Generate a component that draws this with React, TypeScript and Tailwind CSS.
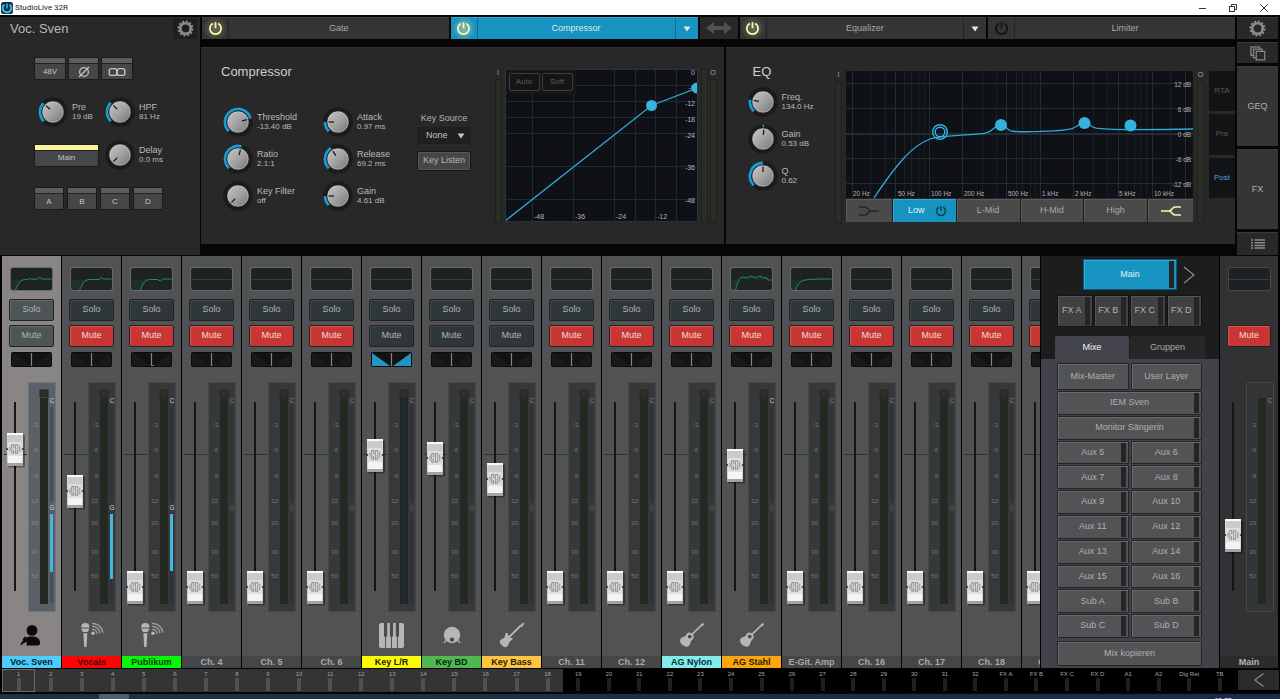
import React from "react";

const SANS = "font-['Liberation_Sans',Arial,sans-serif]";

/* ---------- icons ---------- */

function Power({ className, size = 15 }: { className: string; size?: number }) {
  return (
    <svg width={size} height={size} viewBox="0 0 16 16" className={className} fill="none" stroke="currentColor" strokeWidth="1.9">
      <path d="M5.2 2.7A6 6 0 1 0 10.8 2.7" />
      <path d="M8 1.2V7.6" />
    </svg>
  );
}

function Gear() {
  return (
    <svg width="17" height="17" viewBox="0 0 18 18" fill="none" stroke="#8b8b8b">
      <circle cx="9" cy="9" r="5.6" strokeWidth="2.8" />
      <circle cx="9" cy="9" r="7.4" strokeWidth="2.2" strokeDasharray="2.1 1.774" />
    </svg>
  );
}

function Triangle({ className }: { className: string }) {
  return (
    <svg width="8" height="6" viewBox="0 0 8 6" className={className} fill="currentColor">
      <path d="M0.5 0.5H7.5L4 5.5Z" />
    </svg>
  );
}

function SingerIcon() {
  return (
    <svg width="24" height="24" viewBox="0 0 24 24" fill="#0a0a0a" className="mr-[4px]">
      <circle cx="14" cy="7.4" r="5.4" />
      <path d="M8.6 22.4V18.4L6.4 20L5 18.8L9.6 14C11 13.2 12.3 13.6 14 13.6C19 13.4 22 16 22 19.5V20.6Q22 22.4 20.2 22.4Z" />
      <path d="M2.4 22.4L3 20L5.2 17.6L4.8 16L7 13.4L9.6 15.4L7.2 18.6L4.6 21.2Z" />
    </svg>
  );
}

function MicIcon() {
  return (
    <svg width="26" height="28" viewBox="0 0 26 28" fill="#b6b6b8">
      <path d="M2.2 6.6V6.2A4.1 4.1 0 0 1 10.4 6.2V6.6Z" />
      <path d="M2.4 7.6H10.2C10 9.6 9 10.6 8.2 11H4.4C3.5 10.6 2.6 9.6 2.4 7.6Z" />
      <path d="M4.3 12.2H8.3L7.6 26H5.2Z" />
      <circle cx="14" cy="12.3" r="1.8" />
      <g fill="none" stroke="#a4a4a6" strokeWidth="1.3">
        <path d="M13.2 8.4A4.6 4.6 0 0 1 18 12.6" />
        <path d="M13.2 5.4A7.4 7.4 0 0 1 20.9 12.2" />
        <path d="M13.2 2.5A10.3 10.3 0 0 1 23.8 11.8" />
      </g>
    </svg>
  );
}

function KeysIcon() {
  return (
    <svg width="25" height="25" viewBox="0 0 25 25">
      <rect width="25" height="25" rx="2" fill="#b6b6b8" />
      <path d="M6.6 0V25M12.5 0V25M18.4 0V25" stroke="#515254" strokeWidth="1" />
      <path d="M5 0H8.2V13.5H5ZM10.9 0H14.1V13.5H10.9ZM16.8 0H20V13.5H16.8Z" fill="#4a4b4d" />
    </svg>
  );
}

function DrumIcon() {
  return (
    <svg width="18" height="18" viewBox="0 0 18 18">
      <circle cx="9" cy="9" r="8.2" fill="#b6b6b8" />
      <circle cx="9" cy="13.6" r="2.2" fill="#4a4b4d" />
      <path d="M3 14.5L1 16.8M15 14.5L17 16.8" stroke="#b6b6b8" strokeWidth="1.2" />
    </svg>
  );
}

function BassIcon() {
  return (
    <svg width="26" height="26" viewBox="0 0 26 26" fill="#b6b6b8">
      <path d="M0.8 19.4C1.2 17 4 17 5.4 15.4C6.4 14 6 11.6 7.4 10.8C8.6 10.4 8.8 11.6 8.8 12.6L10 14.6L11.8 16C12.8 15.8 14 15.8 13.8 16.8C13.2 18.4 11.2 18.6 10.4 20.2C9.6 22.2 8.8 24.4 6.8 25.2C4.8 25.4 0.4 21.8 0.8 19.4Z" />
      <path d="M9.6 15.6L21.6 3.8" stroke="#b6b6b8" strokeWidth="1.9" />
      <path d="M20.6 3.6L24.6 0.6L25.4 1.4L22.8 5.2Z" />
    </svg>
  );
}

function GuitarIcon() {
  return (
    <svg width="26" height="26" viewBox="0 0 26 26" fill="#b6b6b8">
      <path d="M1.2 17.6C2 14.6 5.6 15.4 7 13.2C7.8 10.6 10.6 9.6 12.8 11.6C15.6 13.8 15.2 16.6 13 18C11 19.6 12 22.4 9.2 24.4C6.4 25.8 0.2 22.4 1.2 17.6Z" />
      <circle cx="10.8" cy="14.6" r="1.9" fill="#4a4b4d" />
      <path d="M12 13.4L22 3.6" stroke="#b6b6b8" strokeWidth="1.6" />
      <path d="M21.2 3.2L23.6 0.8L25.2 2.4L22.8 4.6Z" />
    </svg>
  );
}

/* ---------- knobs ---------- */

function polar(r: number, deg: number) {
  const a = ((deg - 90) * Math.PI) / 180;
  return `${(15 + r * Math.cos(a)).toFixed(2)} ${(15 + r * Math.sin(a)).toFixed(2)}`;
}

function Knob({ label, value, angle, from = -135 }: { label: string; value: string; angle: number; from?: number }) {
  const gid = "k" + label.replace(/\W/g, "") + value.replace(/\W/g, "");
  return (
    <label className="flex items-center gap-1 whitespace-nowrap">
      <span className="relative block size-[30px] shrink-0">
        <svg width="30" height="30" viewBox="0 0 30 30" className="block">
          <defs>
            <linearGradient id={gid} x1="0" y1="0" x2="1" y2="1">
              <stop offset="0" stopColor="#c8c8c8" />
              <stop offset="0.5" stopColor="#a2a2a2" />
              <stop offset="1" stopColor="#747474" />
            </linearGradient>
          </defs>
          <circle cx="15" cy="15" r="14.8" fill="#1b1b1b" />
          {angle > from && (
            <path
              d={`M${polar(13, from)}A13 13 0 ${angle - from > 180 ? 1 : 0} 1 ${polar(13, angle)}`}
              fill="none"
              stroke="#1a9ad2"
              strokeWidth="2.8"
            />
          )}
          <circle cx="15" cy="15" r="11" fill={`url(#${gid})`} stroke="#0f0f0f" strokeWidth="0.6" />
          <circle cx="15" cy="15" r="10.2" fill="none" stroke="#d8d8d8" strokeOpacity="0.5" strokeWidth="0.8" />
          <path d={`M${polar(4, angle)}L${polar(9.4, angle)}`} stroke="#1c1c1c" strokeWidth="1.3" />
        </svg>
        <input type="range" min="-135" max="135" defaultValue={angle} className="absolute inset-0 size-full cursor-pointer opacity-0" />
      </span>
      <span className="flex flex-col leading-[10px] text-[#b9b9b9]">
        <span className="text-[9px]">{label}</span>
        <span className="text-[8px]">{value}</span>
      </span>
    </label>
  );
}

/* ---------- top section ---------- */

function CapButton({ children, label, className, lit }: { children: React.ReactNode; label?: string; className: string; lit?: boolean }) {
  return (
    <button aria-label={label} className={`flex h-[23px] flex-col overflow-hidden rounded-[1px] border border-[#1a1a1a] bg-[#454647] text-[8px] text-[#c4c4c4] ${className}`}>
      <span className={`h-[6px] w-full shrink-0 border-b border-[#222] ${lit ? "bg-[#fbf3a0]" : "bg-[#5c5d5f]"}`} />
      <span className="flex w-full flex-1 items-center justify-center">{children}</span>
    </button>
  );
}

function InputPanel() {
  return (
    <section className="flex w-[200px] shrink-0 flex-col bg-[#282828]">
      <header className="flex h-[23px] items-center justify-between pl-[10px] pr-[3px]">
        <h1 className="text-[13px] text-[#b9b9b9]">Voc. Sven</h1>
        <button aria-label="Channel settings" className="flex h-5 w-6 items-center justify-center rounded-[2px] bg-[#1e1e1e]">
          <Gear />
        </button>
      </header>
      <div className="flex flex-col pl-[34px] pt-[17px]">
        <div className="flex gap-[2px]">
          <CapButton className="w-[32px]">48V</CapButton>
          <CapButton label="Polarity" className="w-[31px]">
            <svg width="14" height="12" viewBox="0 0 14 12" fill="none" stroke="#c4c4c4" strokeWidth="1.2">
              <circle cx="7" cy="6" r="4.4" />
              <path d="M2 11L12 1" />
            </svg>
          </CapButton>
          <CapButton label="Link" className="w-[32px]">
            <svg width="18" height="10" viewBox="0 0 18 10" fill="none" stroke="#c4c4c4" strokeWidth="1.4">
              <rect x="1.2" y="1.6" width="7.6" height="6.8" rx="2.2" />
              <rect x="9.2" y="1.6" width="7.6" height="6.8" rx="2.2" />
            </svg>
          </CapButton>
        </div>
        <div className="mt-[17px] grid grid-cols-[67px_80px] pl-1">
          <Knob label="Pre" value="19 dB" angle={-48} />
          <Knob label="HPF" value="81 Hz" angle={-45} />
        </div>
        <div className="mt-[13px] grid grid-cols-[71px_80px] items-center">
          <CapButton className="w-[65px]" lit>Main</CapButton>
          <Knob label="Delay" value="0.0 ms" angle={-135} />
        </div>
        <div className="mt-[17px] flex gap-[3px]">
          {["A", "B", "C", "D"].map((l) => (
            <CapButton key={l} className="w-[30px]">{l}</CapButton>
          ))}
        </div>
      </div>
    </section>
  );
}

function ProcessorTab({ name, on, active, menu, bare }: { name: string; on?: boolean; active?: boolean; menu?: boolean; bare?: boolean }) {
  const bg = active ? "bg-[#1793c1]" : "bg-[#343435]";
  const line = active ? "border-[#0e6d92]" : "border-[#232323]";
  return (
    <div className={`flex flex-1 items-stretch border-t ${bg} ${active ? "border-[#2fabd8]" : "border-[#414141]"}`}>
      <button
        aria-label={`${name} on`}
        className={`flex w-[27px] items-center justify-center border-r ${line} ${
          on ? (active ? "bg-[radial-gradient(circle,#7fb5a8_10%,#1793c1_70%)]" : "bg-[radial-gradient(circle,#66664c_10%,#343435_72%)]") : ""
        }`}
      >
        <Power className={on ? "text-[#f8f7b4]" : bare ? "text-[#121212]" : "text-[#777]"} />
      </button>
      <button className={`flex-1 text-[9px] ${active ? "text-[#dcebf2]" : "text-[#a8a8a8]"}`}>{name}</button>
      {menu && (
        <button aria-label={`${name} model`} className={`flex w-[23px] items-center justify-center border-l ${line}`}>
          <Triangle className="text-[#e6e6e6]" />
        </button>
      )}
    </div>
  );
}

function SideMeter({ label, tall }: { label?: string; tall?: boolean }) {
  return (
    <div className="flex w-[7px] flex-col items-center">
      {!tall && <span className="h-[10px] text-[7px] leading-[7px] text-[#a6a6a6]">{label}</span>}
      <span className="w-full flex-1 border border-[#1e201c] bg-[#2a2d26]" />
    </div>
  );
}

function CompressorGraph() {
  return (
    <div className="relative h-[153px] w-[193px] overflow-hidden border border-[#243441] bg-[#101116]">
      <svg width="191" height="151" viewBox="1 1 191 151" className={`block ${SANS}`}>
        <g stroke="#1f2b33" strokeWidth="1">
          {[27, 68, 109, 130, 150, 171].map((x) => <path key={x} d={`M${x + 0.5} 0V153`} />)}
          {[16, 32, 48, 64, 97, 130].map((y) => <path key={y} d={`M0 ${y + 0.5}H193`} />)}
        </g>
        <g fill="#b4b4b4" fontSize="7">
          {[["0", 6], ["-6", 21], ["-12", 37], ["-18", 53], ["-24", 69], ["-36", 101], ["-48", 134]].map(([t, y]) => (
            <text key={t} x="190" y={y} textAnchor="end">{t}</text>
          ))}
          {[["-48", 29], ["-36", 70], ["-24", 111], ["-12", 152]].map(([t, x]) => (
            <text key={t} x={x} y="150">{t}</text>
          ))}
        </g>
        <path d="M0 152L146.5 36.5L192 19" fill="none" stroke="#2fa9d6" strokeWidth="1.3" />
        <circle cx="146.5" cy="36.5" r="5.5" fill="#35b2de" />
        <circle cx="192" cy="19" r="5.5" fill="#35b2de" />
      </svg>
      <div className="absolute left-0 top-0 flex gap-[2px] bg-[#161616] px-[3px] pb-[3px] pt-[3px] text-[8px] text-[#5c5c5c]">
        <button className="h-[18px] w-[31px] rounded-[2px] border border-[#3c3c3c] bg-[#151515]">Auto</button>
        <button className="h-[18px] w-[31px] rounded-[2px] border border-[#3c3c3c] bg-[#151515]">Soft</button>
      </div>
    </div>
  );
}

function CompressorPanel() {
  return (
    <section className="flex w-[523px] grow justify-between border-t border-[#303030] bg-[#282828] pl-5 pr-[7px]">
      <div className="pt-[15px]">
        <h2 className="text-[13px] leading-[18px] text-[#cfcfcf]">Compressor</h2>
        <div className="ml-[2px] mt-[26px] flex">
          <div className="flex w-[100px] flex-col gap-[7px]">
            <Knob label="Threshold" value="-13.40 dB" angle={75} />
            <Knob label="Ratio" value="2.1:1" angle={15} />
            <Knob label="Key Filter" value="off" angle={-135} />
          </div>
          <div className="flex w-[94px] flex-col gap-[7px]">
            <Knob label="Attack" value="0.97 ms" angle={-90} />
            <Knob label="Release" value="69.2 ms" angle={-33} />
            <Knob label="Gain" value="4.61 dB" angle={-90} />
          </div>
          <div className="flex w-[54px] flex-col pt-[6px] text-[9px] text-[#b4b4b4]">
            <label className="flex flex-col items-center">
              <span className="whitespace-nowrap leading-[11px]">Key Source</span>
              <span className="relative mt-[3px] block w-full">
                <select className="h-[17px] w-full appearance-none bg-[#1f1f1f] pl-[9px] text-[9px] text-[#c0c0c0]">
                  <option>None</option>
                </select>
                <Triangle className="pointer-events-none absolute right-[6px] top-[6px] text-[#c8c8c8]" />
              </span>
            </label>
            <button className="mt-[7px] h-5 whitespace-nowrap rounded-[2px] border border-[#171717] bg-[#464647] shadow-[inset_0_0_0_1px_#575757]">Key Listen</button>
          </div>
        </div>
      </div>
      <div className="flex pb-[21px] pt-[21px]">
        <SideMeter label="I" />
        <div className="ml-[3px]"><CompressorGraph /></div>
        <div className="ml-[3px] flex"><SideMeter tall /></div>
        <div className="ml-[2px] flex"><SideMeter label="O" /></div>
      </div>
    </section>
  );
}

const EQ_LINES = [24, 39, 58, 65, 72, 78, 136, 150, 170, 176, 184, 189, 247, 261, 280, 288, 294, 300, 324];
const EQ_MAJOR = [6, 49, 83, 116, 160, 194, 227, 272, 306, 339];

function EqGraph() {
  return (
    <svg width="347" height="127" viewBox="0 0 347 127" className={`block bg-[#101116] ${SANS}`}>
      <g stroke="#182027">
        {EQ_LINES.map((x) => <path key={x} d={`M${x + 0.5} 0V127`} />)}
      </g>
      <g stroke="#212d36">
        {EQ_MAJOR.map((x) => <path key={x} d={`M${x + 0.5} 0V127`} />)}
        {[12, 37, 87, 112].map((y) => <path key={y} d={`M0 ${y + 0.5}H347`} />)}
        <path d="M0 63H347" strokeWidth="2" />
      </g>
      <g fill="#b4b4b4" fontSize="6.4">
        {[["20 Hz", 7], ["50 Hz", 52], ["100 Hz", 85], ["200 Hz", 118], ["500 Hz", 162], ["1 kHz", 196], ["2 kHz", 229], ["5 kHz", 273], ["10 kHz", 308]].map(([t, x]) => (
          <text key={t} x={x} y="125">{t}</text>
        ))}
        {[["12 dB", 16], ["6 dB", 41], ["0 dB", 66], ["-6 dB", 91], ["-12 dB", 116]].map(([t, y]) => (
          <text key={t} x="345" y={y} textAnchor="end">{t}</text>
        ))}
      </g>
      <path
        d="M28 127C36 115 46 100 58 87C66 78 74 72 84 68C92 65.5 110 64.5 125 63.6C138 62.8 143 62.4 147 58C150 55.6 152 54 155 54C159 54 161 58 164 59.6C168 61.2 176 60.8 190 60.6C205 60.2 218 59.8 226 57.6C231 56 234 52 238.500 52C243 52 245 56 250 57.200C258 58.6 268 58.6 284 58.6C310 58.6 330 58.4 347 58"
        fill="none"
        stroke="#2fa9d6"
        strokeWidth="1.3"
      />
      <g fill="none" stroke="#35b2de" strokeWidth="1.4">
        <circle cx="94" cy="61" r="7.3" />
        <circle cx="94" cy="61" r="4.8" />
      </g>
      <g fill="#35b2de">
        <circle cx="155" cy="54" r="6" />
        <circle cx="238.5" cy="52" r="6" />
        <circle cx="284.500" cy="54.500" r="6" />
      </g>
    </svg>
  );
}

function EqPanel() {
  const band = "flex items-center justify-center bg-[#4a4a4b] shadow-[inset_1px_1px_0_#5b5b5c]";
  return (
    <section className="flex w-[510px] grow justify-between border-t border-[#303030] bg-[#282828] pl-[22px]">
      <div className="pt-[15px]">
        <h2 className="pl-[5px] text-[13px] leading-[18px] text-[#cfcfcf]">EQ</h2>
        <div className="mt-[6px] flex flex-col gap-[7px]">
          <Knob label="Freq." value="134.0 Hz" angle={-80} />
          <Knob label="Gain" value="0.53 dB" angle={5} from={-2} />
          <Knob label="Q" value="0.62" angle={0} />
        </div>
      </div>
      <div className="flex pb-[20px] pt-[23px]">
        <SideMeter label="I" />
        <div className="ml-[4px] flex flex-col">
          <EqGraph />
          <div className="mt-px grid h-[23px] grid-cols-[46px_1fr_1fr_1fr_1fr_45px] gap-px bg-[#1a1a1a] text-[9px] text-[#a8a8a8]">
            <button aria-label="Low shelf" className={band}>
              <svg width="20" height="10" viewBox="0 0 20 10" fill="none" stroke="#262626" strokeWidth="1.4">
                <path d="M0 1H6C9 1 9 5 12 5H20M0 9H6C9 9 9 5 12 5" />
              </svg>
            </button>
            <button className="flex items-center justify-center gap-[10px] bg-[#1793c1] pl-[6px] text-[#e6f4fa] shadow-[inset_1px_1px_0_#2fabd8]">
              Low <Power size={12} className="text-[#0b3a4e]" />
            </button>
            <button className={band}>L-Mid</button>
            <button className={band}>H-Mid</button>
            <button className={band}>High</button>
            <button aria-label="High shelf" className={band}>
              <svg width="20" height="10" viewBox="0 0 20 10" fill="none" stroke="#f8f7b4" strokeWidth="1.6">
                <path d="M20 1H14C11 1 11 5 8 5H0M20 9H14C11 9 11 5 8 5" />
              </svg>
            </button>
          </div>
        </div>
        <div className="ml-[4px] flex"><SideMeter label="O" /></div>
        <div className="ml-[5px] grid h-[127px] w-[26px] grid-rows-3 gap-[3px] text-[8px] text-[#55575a]">
          <button className="bg-[#131415]">RTA</button>
          <button className="bg-[#131415]">Pre</button>
          <button className="bg-[#131415] text-[#4aa3ea]">Post</button>
        </div>
      </div>
    </section>
  );
}

function TopArea() {
  const side = "flex items-center justify-center border-t border-[#3a3a3a] bg-[#282828]";
  return (
    <div className="flex h-[238px] pr-[2px]">
      <InputPanel />
      <div className="flex min-w-0 flex-1 flex-col pl-px">
        <div className="flex h-[22px] gap-[2px] pl-px">
          <ProcessorTab name="Gate" on />
          <ProcessorTab name="Compressor" on active menu />
          <button aria-label="Swap order" className="flex w-[38px] items-center justify-center bg-[#282828]">
            <svg width="26" height="12" viewBox="0 0 26 12" fill="#515151">
              <path d="M0 6L8 0V4H18V0L26 6L18 12V8H8V12Z" />
            </svg>
          </button>
          <ProcessorTab name="Equalizer" on menu />
          <ProcessorTab name="Limiter" bare />
        </div>
        <div className="mt-[8px] flex h-[197px] gap-[2px]">
          <CompressorPanel />
          <EqPanel />
        </div>
      </div>
      <nav className="ml-[2px] flex w-[41px] flex-col gap-[3px]">
        <button aria-label="Settings" className={`h-[22px] ${side}`}><Gear /></button>
        <button aria-label="Copy" className={`h-[21px] ${side}`}>
          <svg width="16" height="15" viewBox="0 0 16 15" fill="#282828" stroke="#8b8b8b" strokeWidth="1.2">
            <rect x="1" y="1" width="8.500" height="8.500" />
            <rect x="3.500" y="3.200" width="8.500" height="8.500" />
            <rect x="6.200" y="5.400" width="8.500" height="8.500" />
          </svg>
        </button>
        <button className={`flex-1 text-[9px] text-[#b0b0b0] ${side} bg-[#353536]`}>GEQ</button>
        <button className={`flex-1 text-[9px] text-[#b0b0b0] ${side} bg-[#353536]`}>FX</button>
        <button aria-label="List" className={`h-[23px] ${side}`}>
          <svg width="14" height="10" viewBox="0 0 14 10" stroke="#8b8b8b" strokeWidth="1.5">
            <path d="M0 1H2M3.500 1H14M0 3.700H2M3.500 3.700H14M0 6.400H2M3.500 6.400H14M0 9.100H2M3.500 9.100H14" />
          </svg>
        </button>
      </nav>
    </div>
  );
}

/* ---------- mixer ---------- */

type Channel = {
  name: string;
  fader: number;
  mute?: boolean;
  color?: string;
  icon?: React.ReactNode;
  curve?: string;
  selected?: boolean;
  comp?: boolean;
  gate?: number;
  panned?: boolean;
  panTick?: boolean;
};

const CHANNELS: Channel[] = [
  { name: "Voc. Sven", fader: 192, color: "bg-[#4dcdfb] text-[#0c1c24]", icon: <SingerIcon />, curve: "M4 22C7 14 9 12 14 11.500H17L18.500 10L20 11.200H26L28 9L30 11H40", selected: true, comp: true, gate: 58 },
  { name: "Vocals", fader: 234, mute: true, color: "bg-[#fb0505] text-[#4a0606]", icon: <MicIcon />, curve: "M8 22C11 18 11 12 18 11.500H28L30 9.500L32 11H40", comp: true, gate: 65 },
  { name: "Publikum", fader: 330, mute: true, color: "bg-[#06f806] text-[#07400a]", icon: <MicIcon />, curve: "M9 22C12 14 14 11.500 19 11.500H26L29 13L31 11H40", comp: true, gate: 57, panTick: true },
  { name: "Ch. 4", fader: 330, mute: true },
  { name: "Ch. 5", fader: 330, mute: true },
  { name: "Ch. 6", fader: 330, mute: true },
  { name: "Key L/R", fader: 198, color: "bg-[#fbfb05] text-[#222204]", icon: <KeysIcon />, panned: true },
  { name: "Key BD", fader: 201, color: "bg-[#50b850] text-[#0a260a]", icon: <DrumIcon /> },
  { name: "Key Bass", fader: 222, color: "bg-[#fcc440] text-[#2e2206]", icon: <BassIcon /> },
  { name: "Ch. 11", fader: 330, mute: true },
  { name: "Ch. 12", fader: 330, mute: true },
  { name: "AG Nylon", fader: 330, mute: true, color: "bg-[#80eeec] text-[#0c2a2a]", icon: <GuitarIcon /> },
  { name: "AG Stahl", fader: 208, mute: true, color: "bg-[#fba60d] text-[#2c1c02]", icon: <GuitarIcon />, curve: "M4 22C7 12 8 9 12 9L15 10L20 8L24 10L28 8L32 10L35 9.500L36 12H40", comp: true },
  { name: "E-Git. Amp", fader: 330, mute: true, curve: "M4 22C7 14 10 12 18 11.500L28 11H40" },
  { name: "Ch. 16", fader: 330, mute: true },
  { name: "Ch. 17", fader: 330, mute: true },
  { name: "Ch. 18", fader: 330, mute: true },
  { name: "Ch. 19", fader: 330, mute: true },
];

function Thumb({ curve, dim }: { curve?: string; dim?: boolean }) {
  return (
    <div className={`h-[22px] w-[41px] shrink-0 rounded-[2px] ${dim ? "bg-[#1e2021] shadow-[0_0_0_1px_#46484a]" : "bg-[#1e2221] shadow-[0_0_0_1px_#67696b]"}`}>
      <svg width="41" height="22" viewBox="0 0 40 22" className="block" fill="none">
        {curve ? (
          <>
            <path d={curve + "V11.500H0V22Z"} fill="#1d4a46" fillOpacity="0.35" />
            <path d={curve} stroke="#1f8a7c" strokeWidth="1" />
          </>
        ) : (
          <path d="M0 11.500H40" stroke="#25444a" strokeWidth="1" />
        )}
      </svg>
    </div>
  );
}

function FaderCap() {
  return (
    <svg width="20" height="36" viewBox="0 0 20 36" className="block">
      <rect x="2" y="2.500" width="17" height="33" rx="1.500" fill="#000" fillOpacity="0.35" />
      <rect x="1" y="1" width="16" height="33" rx="1" fill="#d4d4d4" />
      <rect x="1" y="1" width="16" height="2" fill="#fafafa" />
      <rect x="2" y="3" width="14" height="7" fill="#cbcbcb" />
      <rect x="2" y="10" width="14" height="14" fill="#dedede" />
      <rect x="2" y="24" width="14" height="7" fill="#f4f4f4" />
      <rect x="1" y="31" width="16" height="3" fill="#a3a3a3" />
      <g stroke="#7f8887" strokeWidth="0.9" fill="none">
        <path d="M4 14.500V19.500M5.800 12.500C5 15 6.600 17.500 5.600 21M7.800 12.500V16.500M9.600 12.500C8.800 15 10.400 17.500 9.400 21.500M11.600 12.500C12.400 15 11 18 12 21M13.800 13.500V20M7.600 18V21.500" />
        <path d="M5.800 12.600H8M9.600 12.600H11.600M5.600 21.200H7.600M9.400 21.200H12" />
      </g>
      <path d="M0.500 15.500L2.500 17L0.500 18.500ZM17.500 15.500L15.500 17L17.500 18.500Z" fill="#222" />
    </svg>
  );
}

const SCALE: [string, number][] = [["-3", 45], ["-6", 70], ["-9", 96], ["12", 121], ["20", 143], ["30", 172], ["50", 196]];

function Meter({ selected, comp, gate, dim, panned }: { selected?: boolean; comp?: boolean; gate?: number; dim?: boolean; panned?: boolean }) {
  const well = selected ? "#596167" : dim ? "#333537" : "#36383a";
  const inner = selected ? "#464f56" : "#303236";
  return (
    <svg width="28" height="230" viewBox="0 0 28 230" className={`block shrink-0 ${SANS}`}>
      <rect x="0.500" y="0.500" width="27" height="229" rx="1" fill={well} stroke={selected ? "#6d767c" : dim ? "#454749" : "#44474a"} />
      <g fill={selected ? "#868d92" : "#77797b"} fontSize="6">
        {SCALE.map(([t, y]) => (
          <text key={t} x="10" y={y} textAnchor="end">{t}</text>
        ))}
      </g>
      {!dim && <rect x="12" y="8" width="8" height="7" fill="#2d3127" stroke="#24271f" />}
      <rect x="12" y="16" width="8" height="206" fill={panned ? "#1f2628" : "#242922"} />
      <path d="M16 16V222" stroke={panned ? "#2a3336" : "#242922"} />
      <rect x="22" y="25" width="3" height="94" fill={inner} />
      {!dim && <rect x="22" y="131" width="3" height="90" fill={inner} />}
      {dim && <rect x="22" y="119" width="3" height="102" fill={inner} />}
      {gate && <rect x="22" y="132" width="3" height={gate} fill="#45b5e2" />}
      <text x="24" y="21" fontSize="6.500" textAnchor="middle" fill={comp ? "#cfcfcf" : "#808284"}>C</text>
      {!dim && <text x="24" y="127.500" fontSize="6.500" textAnchor="middle" fill={gate ? "#cfcfcf" : "#5c5e60"}>G</text>}
    </svg>
  );
}

function Fader({ pos, name }: { pos: number; name: string }) {
  return (
    <div className="relative w-[26px] shrink-0">
      <span className="absolute left-[2px] top-[72px] h-px w-[23px] bg-[#303132]" />
      <span className="absolute bottom-[21px] left-[12px] top-5 w-[2px] bg-[#151516]" />
      <span className="absolute left-1" style={{ top: pos - 142 }}>
        <FaderCap />
      </span>
      <input type="range" aria-label={`${name} level`} defaultValue={50} className="absolute inset-0 size-full cursor-pointer opacity-0 [writing-mode:vertical-lr]" />
    </div>
  );
}

function muteClass(mute: boolean | undefined, selected: boolean | undefined) {
  if (mute) return "bg-[#c73634] text-[#f3dcdc] shadow-[inset_1px_1px_0_#dc5350]";
  return selected
    ? "bg-[#4e5557] text-[#aeb2b3] shadow-[inset_1px_1px_0_#60686a]"
    : "bg-[#30373a] text-[#b0b4b5] shadow-[inset_1px_1px_0_#3e474a]";
}

function Strip({ ch }: { ch: Channel }) {
  const btn = "h-[22px] w-[45px] rounded-[2px] border border-[#202223] text-[9px]";
  return (
    <article className={`flex w-[59px] shrink-0 flex-col items-center pt-3 ${ch.selected ? "bg-[#8a8585]" : "bg-[#515254]"}`}>
      <Thumb curve={ch.curve} />
      <button className={`mt-[9px] ${btn} ${muteClass(false, ch.selected)}`}>Solo</button>
      <button className={`mt-1 ${btn} ${muteClass(ch.mute, ch.selected)}`}>Mute</button>
      <svg width="41" height="15" viewBox="0 0 41 15" className="mt-[5px] block">
        <rect x="0.500" y="0.500" width="40" height="14" rx="1" fill="#131313" stroke="#0a0a0a" />
        <path d="M1 1L20 14H1ZM40 1L21 14H40Z" fill="#191919" />
        {ch.panned && <path d="M1 1L19 14H1ZM40 1L22 14H40Z" fill="#2196c4" />}
        <path d="M20.500 1V14" stroke="#858585" strokeWidth="1.200" />
        {ch.panTick && <path d="M20 13.500H23" stroke="#2196c4" />}
      </svg>
      <div className="mt-[15px] flex h-[230px] w-full">
        <Fader pos={ch.fader} name={ch.name} />
        <Meter selected={ch.selected} comp={ch.comp} gate={ch.gate} panned={ch.panned} />
      </div>
      <div className="flex w-full flex-1 items-center justify-center pt-[2px]">{ch.icon}</div>
      <h3 className={`h-3 w-full whitespace-nowrap text-center text-[9px] font-bold leading-[13px] ${ch.color ?? "bg-[#454648] text-[#a9a9a9]"}`}>{ch.name}</h3>
    </article>
  );
}

const MIXES = ["Aux 5", "Aux 6", "Aux 7", "Aux 8", "Aux 9", "Aux 10", "Aux 11", "Aux 12", "Aux 13", "Aux 14", "Aux 15", "Aux 16", "Sub A", "Sub B", "Sub C", "Sub D"];

const LIGHT = "bg-[#525355] shadow-[inset_1px_1px_0_#6a6b6d]";

function MixButton({ children, led, className = "" }: { children: string; led?: boolean; className?: string }) {
  return (
    <button className={`flex items-stretch rounded-[1px] border border-[#232425] p-px text-[9px] text-[#b0b0b1] ${LIGHT} ${className}`}>
      <span className={`flex flex-1 items-center justify-center whitespace-nowrap ${led ? "pl-[6px]" : ""}`}>{children}</span>
      {led && <span className="mr-px w-[5px] bg-[#252525]" />}
    </button>
  );
}

function MixPanel() {
  return (
    <aside className="flex w-[178px] shrink-0 flex-col bg-[#1c1d1f] pt-[3px]">
      <div className="flex items-center pl-[42px]">
        <button className="flex h-[31px] w-[94px] items-stretch border border-[#0c5878] bg-[#1793c1] p-px text-[9px] text-[#e6f4fa] shadow-[inset_1px_1px_0_#2fabd8]">
          <span className="flex flex-1 items-center justify-center pl-[6px]">Main</span>
          <span className="mr-px w-[5px] bg-[#222527]" />
        </button>
        <button aria-label="Next mix" className="ml-[6px]">
          <svg width="12" height="18" viewBox="0 0 12 18" fill="none" stroke="#8f8f8f" strokeWidth="1.100">
            <path d="M1 1L11 9L1 17" />
          </svg>
        </button>
      </div>
      <div className="mt-[5px] grid grid-cols-4 gap-px pl-4 pr-[17px] text-[9px] text-[#b0b0b1]">
        {["FX A", "FX B", "FX C", "FX D"].map((f) => (
          <button key={f} className="flex h-8 items-stretch rounded-[1px] border border-[#141415] bg-[#404143] p-px shadow-[inset_1px_1px_0_#545557]">
            <span className="flex flex-1 items-center justify-center whitespace-nowrap">{f}</span>
            <span className="mr-px w-[5px] bg-[#252525]" />
          </button>
        ))}
      </div>
      <div className="mt-[9px] flex gap-px pl-[14px] text-[9px]">
        <button className="h-[23px] w-[74px] rounded-t-[2px] bg-[#43444b] text-[#f0f0f0]">Mixe</button>
        <button className="h-[23px] w-[75px] rounded-t-[2px] bg-[#262729] text-[#a8a8a8]">Gruppen</button>
      </div>
      <div className="flex flex-1 flex-col bg-[#41424a] pb-[2px] pl-4 pr-[17px] pt-[4px]">
        <div className="grid h-[27px] grid-cols-2 gap-[2px]">
          <MixButton>Mix-Master</MixButton>
          <MixButton>User Layer</MixButton>
        </div>
        <div className="mt-px grid flex-1 auto-rows-fr grid-cols-2 gap-x-[2px] gap-y-px">
          <MixButton led className="col-span-2">IEM Sven</MixButton>
          <MixButton led className="col-span-2">Monitor Sängerin</MixButton>
          {MIXES.map((m) => (
            <MixButton key={m} led>{m}</MixButton>
          ))}
        </div>
        <MixButton className="mt-[3px] h-[25px]">Mix kopieren</MixButton>
      </div>
    </aside>
  );
}

function MainStrip() {
  return (
    <article className="flex w-[58px] shrink-0 flex-col items-center bg-[#313234] pt-3">
      <Thumb dim />
      <button className="mt-[35px] h-[22px] w-[44px] rounded-[2px] border border-[#202223] bg-[#c73634] text-[9px] text-[#f3dcdc] shadow-[inset_1px_1px_0_#dc5350]">Mute</button>
      <div className="mt-[35px] flex h-[230px] w-full">
        <Fader pos={278} name="Main" />
        <Meter dim />
      </div>
      <h3 className="mt-auto h-3 w-full bg-[#2a2b2d] text-center text-[9px] font-bold leading-[13px] text-[#b4b4b4]">Main</h3>
    </article>
  );
}

function StripIndex({ label, first, lit }: { label: string; first?: boolean; lit?: boolean }) {
  return (
    <button className={`flex flex-1 flex-col items-center whitespace-nowrap pt-[2px] text-[6px] leading-[7px] text-[#a4a4a4] ${first ? "border border-[#6a6a6a] pt-px" : ""}`}>
      <span>{label}</span>
      <span className={`h-[13px] w-[4px] ${lit ? "bg-[#505152]" : "bg-[#1f1f1f]"}`} />
    </button>
  );
}

const LIT = Array.from({ length: 18 }, (_, i) => String(i + 1));
const REST = [...Array.from({ length: 14 }, (_, i) => String(i + 19)), "FX A", "FX B", "FX C", "FX D", "A1", "A2", "Dig Ret", "TB"];

export default function App() {
  return (
    <div className={`flex min-h-screen flex-col bg-[#060606] ${SANS}`}>
      <header className="flex h-[15px] items-center bg-white pl-px pr-[12px]">
        <svg width="12" height="12" viewBox="0 0 12 12">
          <rect width="12" height="12" rx="2.500" fill="#0e2a3c" />
          <path d="M3.300 2.600A4.400 4.400 0 1 0 8.700 2.600" fill="none" stroke="#35b9ea" strokeWidth="2.200" />
          <path d="M6 1.500V6.500" stroke="#35b9ea" strokeWidth="1.500" />
        </svg>
        <span className="ml-[2px] font-[Roboto,'Noto_Sans',sans-serif] text-[8px] text-[#222]">StudioLive 32R</span>
        <div className="ml-auto flex items-center gap-[23px] text-[#333]">
          <button aria-label="Minimize">
            <svg width="7" height="8" viewBox="0 0 7 8" className="block"><path d="M0 4.500H7" stroke="currentColor" /></svg>
          </button>
          <button aria-label="Restore">
            <svg width="8" height="8" viewBox="0 0 8 8" className="block" fill="none" stroke="currentColor">
              <rect x="0.500" y="2.500" width="5" height="5" />
              <path d="M2.500 2V0.500H7.500V5.500H6" />
            </svg>
          </button>
          <button aria-label="Close">
            <svg width="8" height="8" viewBox="0 0 8 8" className="block" fill="none" stroke="currentColor"><path d="M0.500 0.500L7.500 7.500M7.500 0.500L0.500 7.500" /></svg>
          </button>
        </div>
      </header>
      <main className="flex flex-1 flex-col pt-[2px]">
        <TopArea />
        <div className="mt-px flex h-[412px] grow gap-px bg-black pl-[2px] pr-[2px]">
          <div className="flex min-w-0 flex-1 gap-px overflow-hidden">
            {CHANNELS.map((c) => (
              <Strip key={c.name} ch={c} />
            ))}
          </div>
          <MixPanel />
          <MainStrip />
        </div>
        <footer className="mt-px flex h-[23px] bg-black pl-[2px]">
          <div className="flex w-[561px] shrink-0 bg-[#333434]">
            {LIT.map((l, i) => (
              <StripIndex key={l} label={l} lit first={i === 0} />
            ))}
          </div>
          <div className="grid flex-1 grid-cols-22">
            {REST.map((l) => (
              <StripIndex key={l} label={l} />
            ))}
          </div>
          <button aria-label="Back" className="ml-[3px] mr-px mt-px flex h-5 w-[41px] items-center justify-center bg-[#2a2a2b]">
            <svg width="10" height="14" viewBox="0 0 10 14" fill="none" stroke="#8f8f8f" strokeWidth="1.100"><path d="M9.500 0.500L0.800 7L9.500 13.500" /></svg>
          </button>
        </footer>
      </main>
      <div className="mt-[2px] flex h-[5px] overflow-hidden bg-linear-to-r from-[#1d343f] to-[#1a2950] pl-[99px] pr-[48px]">
        <span className="h-full w-[30px] bg-[#4a626d]" />
        <span className="ml-auto pt-[2px] text-[7px] leading-[9px] text-white">15:22</span>
      </div>
    </div>
  );
}
